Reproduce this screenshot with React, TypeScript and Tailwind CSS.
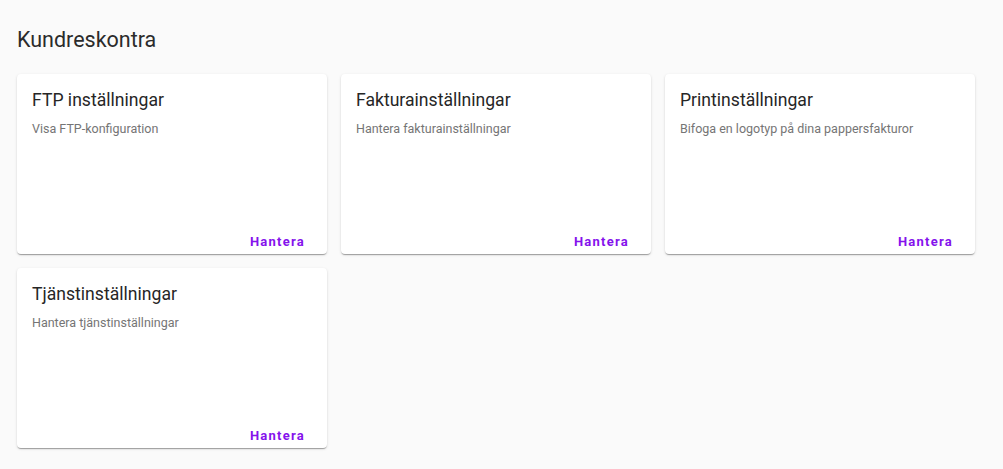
import React from 'react';

const CARDS = [
  { title: 'FTP inställningar', desc: 'Visa FTP-konfiguration' },
  { title: 'Fakturainställningar', desc: 'Hantera fakturainställningar' },
  { title: 'Printinställningar', desc: 'Bifoga en logotyp på dina pappersfakturor' },
  { title: 'Tjänstinställningar', desc: 'Hantera tjänstinställningar' },
];

const SettingsCard: React.FC<{ title: string; desc: string }> = ({ title, desc }) => (
  <div className="bg-white rounded-[4px] h-[180px] flex flex-col shadow-[0_2px_1px_-1px_rgba(0,0,0,0.2),0_1px_1px_0_rgba(0,0,0,0.14),0_1px_3px_0_rgba(0,0,0,0.12)]">
    <div className="flex-1 px-[15px] pt-[14px]">
      <h2 className="text-[17.6px] leading-[24px] text-[#262626]">{title}</h2>
      <p className="mt-[9px] text-[12.5px] leading-[16px] text-[#757575]">{desc}</p>
    </div>
    <div className="flex justify-end pr-[22px] pb-[4px]">
      <button className="text-[13px] leading-[16px] font-bold tracking-[1.25px] text-[#8512ec]">
        Hantera
      </button>
    </div>
  </div>
);

export default function App() {
  return (
    <div className="min-h-screen bg-[#fafafa] px-[17px] pt-[27px] font-['Roboto','Liberation_Sans',sans-serif]">
      <h1 className="text-[21.5px] leading-[26px] text-[#2b2b2b]">Kundreskontra</h1>
      <div className="mt-[21px] grid grid-cols-[repeat(3,310px)] gap-[14px]">
        {CARDS.map((c) => (
          <SettingsCard key={c.title} title={c.title} desc={c.desc} />
        ))}
      </div>
    </div>
  );
}
